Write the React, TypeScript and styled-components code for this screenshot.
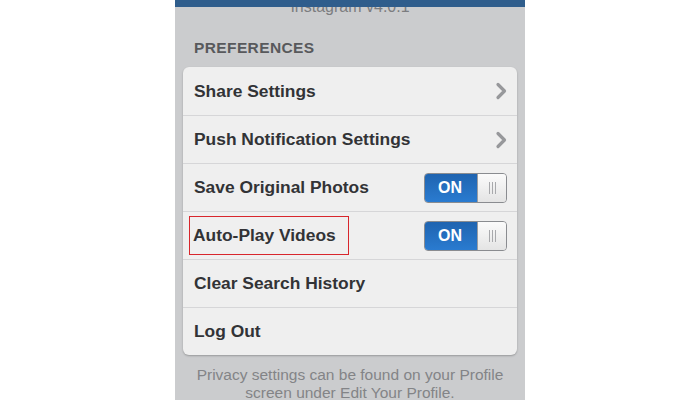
import React from 'react';
import styled, {createGlobalStyle} from "styled-components";

const GlobalStyle = createGlobalStyle`
  html, body {
    margin: 0;
    padding: 0;
    background: #ffffff;
  }
  body {
    font-family: "Liberation Sans", Arial, sans-serif;
  }
`

type Row = {
    label: string;
    kind: "chevron" | "toggle" | "none";
    marked?: boolean;
};

const rows: Row[] = [
    {label: "Share Settings", kind: "chevron"},
    {label: "Push Notification Settings", kind: "chevron"},
    {label: "Save Original Photos", kind: "toggle"},
    {label: "Auto-Play Videos", kind: "toggle", marked: true},
    {label: "Clear Search History", kind: "none"},
    {label: "Log Out", kind: "none"},
];

const Chevron = () => (
    <svg width="12" height="18" viewBox="0 0 12 18">
        <path d="M3 2.5 L9.5 9 L3 15.5" fill="none" stroke="#97989b" strokeWidth="3.2" strokeLinecap="round" strokeLinejoin="round"/>
    </svg>
);

const Toggle = () => (
    <StyledToggle>
        <ToggleOn>ON</ToggleOn>
        <Knob>
            <Grip/><Grip/><Grip/>
        </Knob>
    </StyledToggle>
);

export default function App() {
    return (
        <Page>
            <GlobalStyle/>
            <Screen>
                <TopBar/>
                <Version>Instagram v4.0.1</Version>
                <SectionTitle>PREFERENCES</SectionTitle>
                <Card>
                    {rows.map((row) => (
                        <StyledRow key={row.label}>
                            <Label marked={row.marked}>{row.label}</Label>
                            {row.kind === "chevron" && <Chevron/>}
                            {row.kind === "toggle" && <Toggle/>}
                        </StyledRow>
                    ))}
                </Card>
                <Footer>Privacy settings can be found on your Profile<br/>screen under Edit Your Profile.</Footer>
            </Screen>
        </Page>
    );
}

const Page = styled.div`
  width: 700px;
  height: 400px;
  overflow: hidden;
  display: flex;
  justify-content: center;
  background: #ffffff;
`

const Screen = styled.div`
  position: relative;
  width: 350px;
  height: 400px;
  background: #cbccce;
  display: flex;
  flex-direction: column;
  overflow: hidden;
`

/* nav bar lies over the scrolled content */
const TopBar = styled.div`
  position: absolute;
  top: 0;
  left: 0;
  right: 0;
  height: 7px;
  background: #2f5d8c;
  z-index: 1;
`

const Version = styled.div`
  margin-top: -1px;
  height: 14px;
  text-align: center;
  font-size: 16px;
  color: #7c7d80;
  line-height: 16px;
`

const SectionTitle = styled.div`
  margin: 26px 0 0 19px;
  font-size: 15.5px;
  font-weight: 700;
  letter-spacing: 0.025em;
  color: #58595c;
`

const Card = styled.div`
  margin: 10px 8px 0 8px;
  background: #efefef;
  border-radius: 6px;
  box-shadow: 0 1px 2px rgba(0, 0, 0, 0.25);
  display: flex;
  flex-direction: column;
`

const StyledRow = styled.div`
  height: 48px;
  box-sizing: border-box;
  padding: 0 10px 0 11px;
  display: flex;
  align-items: center;
  justify-content: space-between;
  border-top: 1px solid #d6d6d8;

  &:first-child {
    border-top: none;
  }
`

const Label = styled.span<{ marked?: boolean }>`
  font-size: 17.4px;
  font-weight: 700;
  color: #323336;
  padding: ${({marked}) => (marked ? "8px 12px 8px 3px" : "0")};
  margin-left: ${({marked}) => (marked ? "-4px" : "0")};
  outline: ${({marked}) => (marked ? "1.5px solid #d8262c" : "none")};
`

const StyledToggle = styled.div`
  width: 83px;
  height: 30px;
  box-sizing: border-box;
  border: 1px solid #8a8c90;
  border-radius: 4px;
  overflow: hidden;
  display: flex;
  box-shadow: inset 0 1px 2px rgba(0, 0, 0, 0.3);
`

const ToggleOn = styled.div`
  flex: 1;
  display: flex;
  align-items: center;
  justify-content: center;
  background: linear-gradient(#1f64b0, #2a7bd0);
  color: #ffffff;
  font-size: 16px;
  font-weight: 700;
  padding-right: 2px;
`

const Knob = styled.div`
  width: 28px;
  background: linear-gradient(#fbfbfb, #e4e4e4);
  border-left: 1px solid #9a9ca0;
  display: flex;
  align-items: center;
  justify-content: center;
  gap: 2px;
`

const Grip = styled.span`
  width: 1px;
  height: 12px;
  background: #a8a9ac;
`

const Footer = styled.div`
  margin-top: 11px;
  text-align: center;
  font-size: 15.5px;
  line-height: 18px;
  color: #838487;
`
